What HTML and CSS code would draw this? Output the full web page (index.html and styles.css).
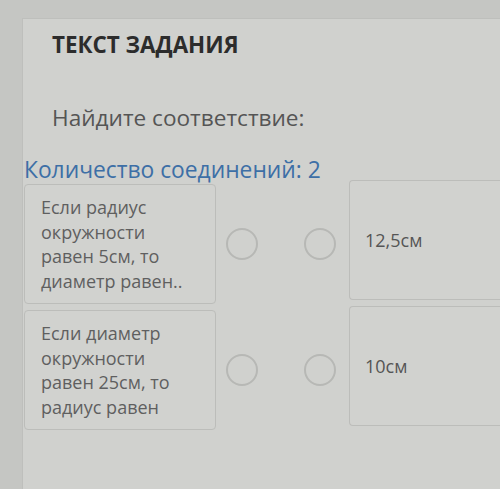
FILE: index.html
```html
<!DOCTYPE html>
<html lang="ru">
<head>
  <meta charset="UTF-8" />
  <title>Текст задания</title>
  <link rel="stylesheet" href="styles.css">
</head>
<body>
  <div class="page">
    <div class="task-head">
      <h1 class="task-title">ТЕКСТ ЗАДАНИЯ</h1>
      <p class="task-prompt">Найдите соответствие:</p>
    </div>

    <div class="match">
      <p class="match-count">Количество соединений: 2</p>

      <div class="match-row">
        <div class="card card-left">Если радиус окружности равен 5см, то диаметр равен..</div>
        <div class="dots">
          <span class="dot"></span>
          <span class="dot"></span>
        </div>
        <div class="card card-right">12,5см</div>
      </div>

      <div class="match-row">
        <div class="card card-left">Если диаметр окружности равен 25см, то радиус равен</div>
        <div class="dots">
          <span class="dot"></span>
          <span class="dot"></span>
        </div>
        <div class="card card-right">10см</div>
      </div>
    </div>
  </div>
</body>
</html>
```

FILE: styles.css
```css
body {
  margin: 0;
  background-color: #c5c6c3;
  font-family: 'Open Sans', 'Noto Sans', sans-serif;
  overflow: hidden;
}

.page {
  height: 470px;
  margin: 18px 0 0 22px;
  border-left: 1px solid #bebfbc;
  border-top: 1px solid #bebfbc;
  background-color: #d0d1ce;
}

.task-head {
  padding: 0 0 0 29px;
}

.task-title {
  margin: 0;
  padding-top: 12px;
  font-size: 22.4px;
  font-weight: 700;
  color: #2c2c2c;
  line-height: 28px;
}

.task-prompt {
  margin: 0;
  padding: 45px 0 0;
  font-size: 22.6px;
  color: #555;
  line-height: 28px;
}

.match {
  padding-left: 1px;
}

.match-count {
  margin: 0;
  padding-top: 25px;
  font-size: 22.8px;
  color: #3d6fa6;
  line-height: 26px;
}

.match-row {
  display: flex;
  align-items: stretch;
  margin-top: 1px;
}

.match-row + .match-row {
  margin-top: 6px;
}

.card {
  flex-shrink: 0;
  border: 1px solid #bcbdba;
  border-radius: 4px;
  background-color: #d1d2cf;
  color: #5f5f5f;
  font-size: 18px;
  line-height: 24.5px;
}

.card-left {
  width: 155px;
  padding: 10px 19px 10px 16px;
}

.card-right {
  flex: 1;
  min-width: 0;
  margin: -4px 0 4px;
  padding: 0 15px;
  display: flex;
  align-items: center;
  color: #555;
  border-right: none;
  border-radius: 4px 0 0 4px;
}

.dots {
  flex-shrink: 0;
  display: flex;
  align-items: center;
  gap: 46px;
  padding: 0 13px 0 10px;
}

.dot {
  width: 28px;
  height: 28px;
  border: 2px solid #b7b8b5;
  border-radius: 50%;
}
```
